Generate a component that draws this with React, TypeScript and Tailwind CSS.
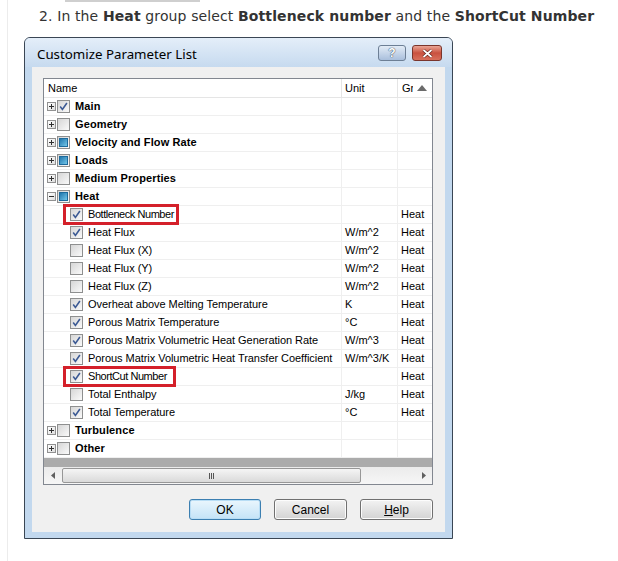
import React from 'react';

type Mark = 'checked' | 'empty' | 'partial';

interface Row {
  name: string;
  group?: boolean;
  sign?: '+' | '-';
  mark: Mark;
  unit?: string;
  cat?: string;
  box?: string;
}

const rows: Row[] = [
  { name: 'Main', group: true, sign: '+', mark: 'checked' },
  { name: 'Geometry', group: true, sign: '+', mark: 'empty' },
  { name: 'Velocity and Flow Rate', group: true, sign: '+', mark: 'partial' },
  { name: 'Loads', group: true, sign: '+', mark: 'partial' },
  { name: 'Medium Properties', group: true, sign: '+', mark: 'empty' },
  { name: 'Heat', group: true, sign: '-', mark: 'partial' },
  { name: 'Bottleneck Number', mark: 'checked', cat: 'Heat', box: 'w-[116px]' },
  { name: 'Heat Flux', mark: 'checked', unit: 'W/m^2', cat: 'Heat' },
  { name: 'Heat Flux (X)', mark: 'empty', unit: 'W/m^2', cat: 'Heat' },
  { name: 'Heat Flux (Y)', mark: 'empty', unit: 'W/m^2', cat: 'Heat' },
  { name: 'Heat Flux (Z)', mark: 'empty', unit: 'W/m^2', cat: 'Heat' },
  { name: 'Overheat above Melting Temperature', mark: 'checked', unit: 'K', cat: 'Heat' },
  { name: 'Porous Matrix Temperature', mark: 'checked', unit: '°C', cat: 'Heat' },
  { name: 'Porous Matrix Volumetric Heat Generation Rate', mark: 'checked', unit: 'W/m^3', cat: 'Heat' },
  { name: 'Porous Matrix Volumetric Heat Transfer Coefficient', mark: 'checked', unit: 'W/m^3/K', cat: 'Heat' },
  { name: 'ShortCut Number', mark: 'checked', cat: 'Heat', box: 'w-[113px]' },
  { name: 'Total Enthalpy', mark: 'empty', unit: 'J/kg', cat: 'Heat' },
  { name: 'Total Temperature', mark: 'checked', unit: '°C', cat: 'Heat' },
  { name: 'Turbulence', group: true, sign: '+', mark: 'empty' },
  { name: 'Other', group: true, sign: '+', mark: 'empty' },
];

function Check({ mark }: { mark: Mark }) {
  return (
    <span className="flex h-[13px] w-[13px] shrink-0 items-center justify-center border border-[#8e8f8f] bg-linear-to-br from-[#d6d6d6] to-[#fafafa]">
      {mark === 'checked' && (
        <svg width="9" height="9" viewBox="0 0 9 9">
          <path d="M1.2 4.6 L3.4 7.4 L7.9 1" fill="none" stroke="#3c5a94" strokeWidth="1.6" />
        </svg>
      )}
      {mark === 'partial' && (
        <span className="h-[9px] w-[9px] border border-[#1c6a9c] bg-linear-to-br from-[#1d77ad] to-[#72c6e8]" />
      )}
    </span>
  );
}

function Expander({ sign }: { sign: '+' | '-' }) {
  return (
    <span className="relative h-[9px] w-[9px] shrink-0 border border-[#919191] bg-linear-to-br from-white to-[#dedede]">
      <span className="absolute left-[1px] top-[3px] h-[1px] w-[5px] bg-[#2f2f2f]" />
      {sign === '+' && <span className="absolute left-[3px] top-[1px] h-[5px] w-[1px] bg-[#2f2f2f]" />}
    </span>
  );
}

function TreeRow({ row }: { row: Row }) {
  return (
    <div className="relative flex h-[18px] border-b border-[#efefef]">
      <div className="flex w-[298px] items-center border-r border-[#efefef]">
        {row.group ? (
          <>
            <span className="ml-[3px] flex">
              <Expander sign={row.sign!} />
            </span>
            <span className="ml-[1px] flex">
              <Check mark={row.mark} />
            </span>
            <span className="ml-[5px] whitespace-nowrap text-[11px] font-bold tracking-[0.12px]">{row.name}</span>
          </>
        ) : (
          <>
            <span className="ml-[26px] flex">
              <Check mark={row.mark} />
            </span>
            <span
              className={`ml-[5px] whitespace-nowrap text-[11px] ${row.box ? 'tracking-[-0.45px]' : 'tracking-[-0.05px]'}`}
            >
              {row.name}
            </span>
          </>
        )}
      </div>
      <div className="flex w-[56px] items-center border-r border-[#efefef] pl-[3px] text-[11px]">
        {row.unit}
      </div>
      <div className="flex flex-1 items-center pl-[3px] text-[11px]">{row.cat}</div>
      {row.box && (
        <div className={`absolute left-[19px] top-[-2px] h-[21px] border-[3px] border-[#d4202a] ${row.box}`} />
      )}
    </div>
  );
}

function DlgButton({ children, primary }: { children: React.ReactNode; primary?: boolean }) {
  return (
    <button
      className={
        primary
          ? 'h-[21px] w-[72px] rounded-[3px] border border-[#3c7fb1] bg-linear-to-b from-[#eaf6fd] to-[#c4e3f7] text-[12px] text-black shadow-[inset_0_0_0_1px_#b8ddf5]'
          : 'h-[21px] w-[73px] rounded-[3px] border border-[#707070] bg-linear-to-b from-[#f3f3f3] to-[#d3d3d3] text-[12px] text-black shadow-[inset_0_0_0_1px_#fcfcfc]'
      }
    >
      {children}
    </button>
  );
}

export default function App() {
  return (
    <div className="h-[561px] w-[618px] overflow-hidden bg-white font-['Liberation_Sans',Arial,sans-serif]">
      <div className="ml-[7px] h-full border-l border-[#ececec]">
        <div className="ml-[57px] h-[2px] w-[135px] bg-[#cfcfcf]" />
        <p className="ml-[31px] mt-[6px] whitespace-nowrap font-['DejaVu_Sans',Verdana,sans-serif] text-[14px] leading-[16px] tracking-[0.12px] text-[#333]">
          2. In the <b>Heat</b> group select <b>Bottleneck number</b> and the <b>ShortCut Number</b>
        </p>

        {/* dialog */}
        <div className="ml-[16px] mt-[13px] flex h-[502px] w-[429px] flex-col rounded-t-[6px] border border-[#3a4654] bg-[#c2d8ee]">
          <div className="flex h-[29px] items-center rounded-t-[5px] bg-linear-to-b from-[#e4eef9] to-[#c6daef] pl-[12px] pr-[10px]">
            <span className="mt-[5px] font-['Noto_Sans',sans-serif] text-[13.3px] text-black">Customize Parameter List</span>
            <div className="ml-auto mt-[1px] flex gap-[6px]">
              <div className="flex h-[16px] w-[28px] items-center justify-center rounded-[3px] border border-[#6d7f95] bg-linear-to-b from-[#e3ecf6] to-[#a9bfdc]">
                <span className="text-[12px] font-bold leading-none text-white [text-shadow:0_0_1px_#2c3e56,0_0_1px_#2c3e56]">?</span>
              </div>
              <div className="flex h-[16px] w-[30px] items-center justify-center rounded-[3px] border border-[#7a352c] bg-linear-to-b from-[#e9a597] via-[#c9513f] to-[#d8705c]">
                <svg width="11" height="9" viewBox="0 0 11 9">
                  <path d="M1.5 1 L9.5 8 M9.5 1 L1.5 8" stroke="#5a1d15" strokeWidth="3" />
                  <path d="M1.5 1 L9.5 8 M9.5 1 L1.5 8" stroke="#ffffff" strokeWidth="1.7" />
                </svg>
              </div>
            </div>
          </div>

          <div className="mx-[7px] mb-[6px] flex flex-1 flex-col bg-[#f0f0f0]">
            {/* list */}
            <div className="ml-[11px] mt-[11px] flex h-[407px] w-[390px] flex-col border border-[#828790] bg-white text-black">
              <div className="flex h-[19px] border-b border-[#e5e5e5] text-[11px]">
                <div className="flex w-[298px] items-center border-r border-[#e5e5e5] pl-[4px]">Name</div>
                <div className="flex w-[56px] items-center border-r border-[#e5e5e5] pl-[3px]">Unit</div>
                <div className="flex flex-1 items-center pl-[4px]">
                  <span className="w-[11px] overflow-hidden whitespace-nowrap">Gr</span>
                  <svg className="ml-[4px]" width="10" height="6" viewBox="0 0 10 6">
                    <path d="M0 6 L5 0 L10 6 Z" fill="#6b6b6b" />
                  </svg>
                </div>
              </div>
              {rows.map((r) => (
                <TreeRow key={r.name} row={r} />
              ))}
              <div className="h-[9px] bg-[#ababab]" />
              <div className="flex h-[17px] items-center bg-linear-to-b from-[#ebebeb] to-[#f6f6f6]">
                <div className="flex w-[17px] justify-center">
                  <svg width="4" height="7" viewBox="0 0 4 7">
                    <path d="M4 0 L0 3.5 L4 7 Z" fill="#606060" />
                  </svg>
                </div>
                <div className="ml-[1px] flex h-[15px] w-[299px] items-center justify-center rounded-[2px] border border-[#979797] bg-linear-to-b from-[#f5f5f5] to-[#dadada]">
                  <span className="flex gap-[1px]">
                    <span className="h-[6px] w-[1px] bg-[#555]" />
                    <span className="h-[6px] w-[1px] bg-[#555]" />
                    <span className="h-[6px] w-[1px] bg-[#555]" />
                  </span>
                </div>
                <div className="ml-auto flex w-[17px] justify-center">
                  <svg width="4" height="7" viewBox="0 0 4 7">
                    <path d="M0 0 L4 3.5 L0 7 Z" fill="#606060" />
                  </svg>
                </div>
              </div>
            </div>

            {/* buttons */}
            <div className="mr-[12px] mt-[14px] flex justify-end gap-[13px]">
              <DlgButton primary>OK</DlgButton>
              <DlgButton>Cancel</DlgButton>
              <DlgButton>
                <span className="underline">H</span>elp
              </DlgButton>
            </div>
          </div>
        </div>
      </div>
    </div>
  );
}
